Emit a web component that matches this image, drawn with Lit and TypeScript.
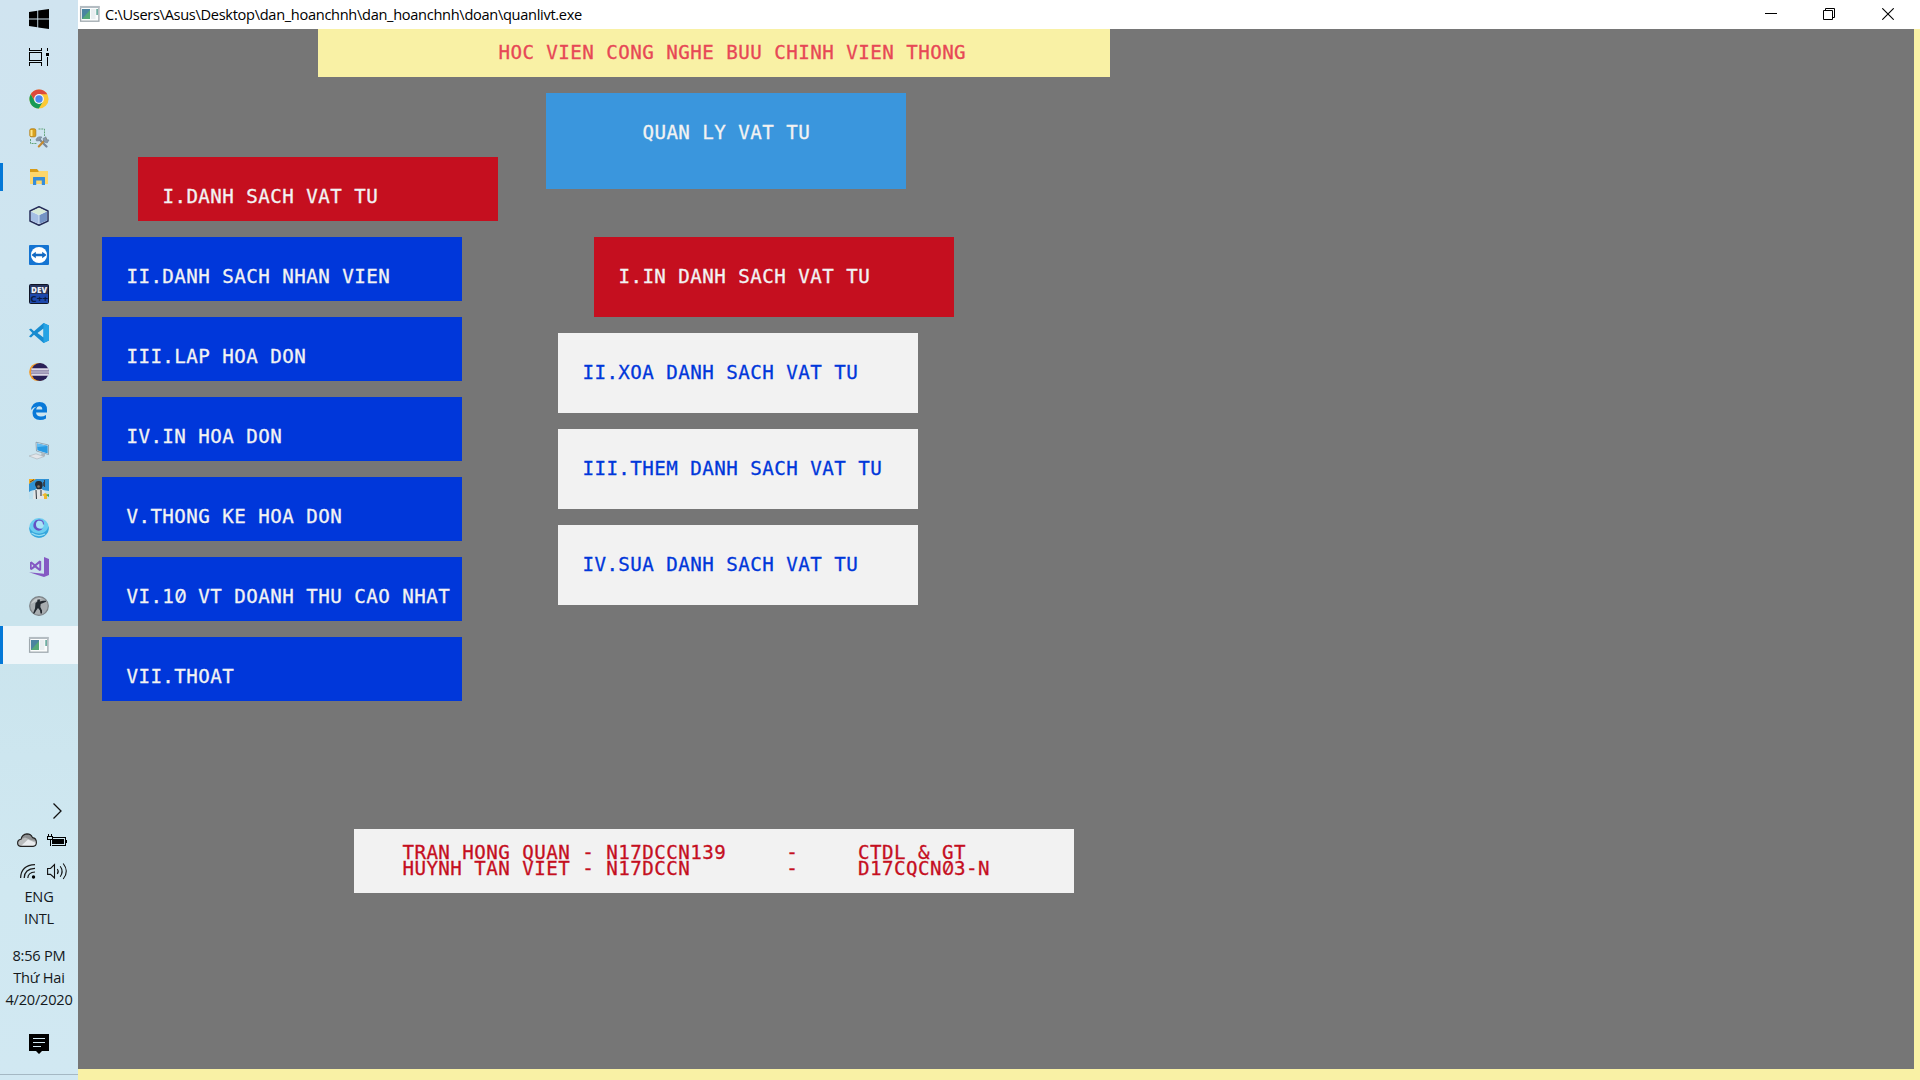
import { LitElement, html, css, svg } from "lit";
import { customElement, property } from "lit/decorators.js";
import { classMap } from "lit/directives/class-map.js";

const consoleIcon = svg`
  <rect x=".6" y="2.6" width="18.3" height="14.6" fill="#fafcfc" stroke="#9fa8ae" stroke-width="1.3"/>
  <rect x="0" y="2" width="19.5" height="2" fill="#b4bcc2"/>
  <rect x="2" y="5" width="8" height="10" fill="#4a84a0"/>
  <path d="M2 15L10 6V15Z" fill="#55a978"/>
  <rect x="11" y="5" width="4.5" height="10" fill="#e9eef0"/>
  <path d="M16.4 5h1.4v6h-1.4z" fill="#4c9a8b"/>`;

const icons: Record<string, unknown> = {
  windows: svg`<path d="M0 3L8.3 1.8V9.5H0ZM9.2 1.6L20 0V9.5H9.2ZM0 10.5H8.3V18.2L0 17ZM9.2 10.5H20V20L9.2 18.4Z" fill="#000"/>`,
  taskview: svg`<g fill="none" stroke="#000" stroke-width="1.1" shape-rendering="crispEdges">
    <path d="M.5 .5V3.5H12.5V.5M.5 5.5H12.5V13.5H.5ZM.5 19V15.5H12.5V19M18.5 .5V4M18.5 10V19"/></g><rect x="17" y="6" width="3" height="3"/>`,
  chrome: svg`<circle cx="10" cy="10" r="9.6" fill="#fcc934"/>
    <path d="M10 .4A9.6 9.6 0 0 1 18.3 5.3H10L6 12 1.7 5.2A9.6 9.6 0 0 1 10 .4Z" fill="#dc4a3d"/>
    <path d="M1.7 5.2L5.9 12.4 10 14.7 14 12.4 9.8 19.6A9.6 9.6 0 0 1 1.7 5.2Z" fill="#169a55"/>
    <circle cx="10" cy="10" r="4.9" fill="#f3f7fa"/><circle cx="10" cy="10" r="3.7" fill="#4b87ee"/>`,
  database: svg`<path d="M9.5 1H15.5V8M1.5 11V15.5H8" fill="none" stroke="#63a57c" stroke-dasharray="2 .8"/>
    <rect x=".8" y=".8" width="6" height="8" rx="1.5" fill="#d9a21d" stroke="#b37b13" stroke-width=".8"/>
    <path d="M2.5 2V8" stroke="#ffe78a" stroke-width="2"/>
    <path d="M10 11L17.5 18.5" stroke="#79889a" stroke-width="2.3" stroke-linecap="round"/>
    <path d="M17 11L9.8 18.5" stroke="#c58a2f" stroke-width="2.1" stroke-linecap="round"/>
    <path d="M7 11.5Q8.5 7.8 13 9L10 12.8 7.5 13ZM14 10.5L17 8.8 17.5 11.5 20 12 18.2 15 15 14Z" fill="#8899a8" stroke="#66788c" stroke-width=".5"/>`,
  explorer: svg`<path d="M1 2H8L9.7 4H18.5V8H1Z" fill="#d89b16"/><path d="M1 5H8.8L10.3 4H19V16.5Q19 17 18.4 17H1Z" fill="#fdd66b"/>
    <path d="M4 18V10.5Q4 10 4.5 10H15.5Q16 10 16 10.5V18H12.8V13.6H7.2V18Z" fill="#368cd8"/>`,
  cube: svg`<path d="M10 .8L19 5V15L10 19.3 1 15V5Z" fill="#eaf3fa" stroke="#252c58" stroke-width="1.5" stroke-linejoin="round"/>
    <path d="M2 5.5L10 9.2V18L2 14.4Z" fill="#a6bfe4"/><path d="M10 9.2L18 5.5V14.4L10 18Z" fill="#7392c4"/>
    <path d="M2.4 5.4L10 1.8 17.6 5.4 10 9Z" fill="#d7ead8"/><path d="M10 9V18" stroke="#d7e5f4"/>`,
  teamviewer: svg`<rect width="20" height="20" rx="1" fill="#1474d2"/><circle cx="10" cy="10" r="8.1" fill="#fff"/>
    <path d="M2.4 10L6.8 6.7V8.7H13.2V6.7L17.6 10 13.2 13.3V11.3H6.8V13.3Z" fill="#1269c2"/>`,
  dev: svg`<rect x=".5" y=".5" width="19" height="19" rx="1" fill="#1d48ac" stroke="#101526"/>
    <rect x="1" y="1" width="18" height="9" fill="#27355e"/>
    <text x="10" y="9" text-anchor="middle" font-family="Open Sans" font-size="8.4" font-weight="800" fill="#eef1f6" textLength="16" lengthAdjust="spacingAndGlyphs">DEV</text>
    <text x="1.3" y="18.2" font-family="Open Sans" font-size="9.5" font-weight="700" fill="#081940" textLength="18" lengthAdjust="spacingAndGlyphs">C++</text>`,
  vscode: svg`<path d="M14.5 0L20 2.5V17.5L14.5 20 5 11.7 2 14.5 0 13.4 3.4 10 0 6.6 2 5.4 5 8.3Z" fill="#178bd0"/>
    <path d="M14.5 5.5V14.5L8.5 10Z" fill="#cfe6f0"/><path d="M14.5 0L20 2.5V17.5L14.5 20Z" fill="#25a3e5"/>`,
  eclipse: svg`<circle cx="9.2" cy="10" r="9.1" fill="#f49a27"/><circle cx="11" cy="10" r="8.9" fill="#2a2057"/>
    <path d="M2.3 7.2H19.8M2 10H20M2.3 12.8H19.8" stroke="#dcd8e8" stroke-width="1.7"/><path d="M2.1 8.6H19.9M2.1 11.4H19.9" stroke="#9c94b5" stroke-width="1.2"/>`,
  edge: svg`<path d="M2 9Q3 1 10.5 1 18 1 18 9V11.6H7Q7.4 15.5 12 15.5 14.6 15.5 17 14V17.4Q14.5 19 11 19 3.6 18.8 3.5 12 3.5 7.5 8 5.4 4.3 5.7 2 9ZM7.2 8.5H13.3Q13.3 5.2 10.4 5.2 7.8 5.3 7.2 8.5Z" fill="#0879d8"/>`,
  remote: svg`<path d="M7 2.2L19.5 5V14.5L7.5 11Z" fill="#e5edf2" stroke="#657c8d" stroke-width=".6"/><path d="M8 3.4L18.7 5.8V13.4L8.3 10.3Z" fill="#299be3"/>
    <path d="M8.2 7L18.5 5.9 8 3.5Z" fill="#63bdf2"/><path d="M12.5 13L16 13.8V16.5H12Z" fill="#adb8bf"/><path d="M0 16L7 13.8 15 16.6 8 19Z" fill="#e3e6ea" stroke="#a9b1b7" stroke-width=".6"/>`,
  soldier: svg`<rect width="20" height="20" fill="#2f91d4"/><path d="M0 13Q5 9 20 12V20H0Z" fill="#bfe1ef"/>
    <path d="M0 0H7L0 5Z" fill="#f1ae25"/><path d="M1 3L5 .7" stroke="#6b3c15"/>
    <path d="M4 20L4.5 12 8 9.5H12L16 12.5V20Z" fill="#e3e5e6"/><path d="M6 6Q6 1.5 10 2 14 2 13.6 7L12.3 10.3H8Z" fill="#242a33"/>
    <path d="M7 11L7.5 20M12 11V17M15.5 1V8M14.7 3V7" stroke="#39414a" stroke-width="1.1"/><circle cx="9.5" cy="7.5" r="1.3" fill="#897462"/>
    <path d="M13 16L16 14 20 16 18 17V20H15V17Z" fill="#efb82c"/><path d="M17 16L20 15V18Z" fill="#35a863"/>`,
  swirl: svg`<circle cx="10" cy="10" r="9.9" fill="#6bcdf0"/>
    <path d="M.3 9Q3 16 11 15.5 18 15 19.5 8 20.8 14 15 18.4 8 21.5 3 17 .2 14 .3 9Z" fill="#36a5dc"/>
    <path d="M2.5 15Q9 19.5 16 16" fill="none" stroke="#96def3" stroke-width="1.2"/>
    <path d="M11 2.1A5.3 5.3 0 1 0 14 10.3 4.6 4.6 0 0 1 7.4 6.2 4.2 4.2 0 0 1 11 2.1Z" fill="#6550c4"/>
    <circle cx="10.9" cy="6.6" r="3.9" fill="#a9e2f6"/><path d="M9.5 2.2Q14.5 1.8 14.6 6.5" fill="none" stroke="#6a62cc" stroke-width="1.2"/>`,
  visual: svg`<path d="M15 0L20 2V18L15 20 0 15.3 15 16.7Z" fill="#8459c3"/>
    <path fill-rule="evenodd" d="M1 5.2L2.6 4.5 6 7.2 10.5 3.5 12.2 4.2V13.2L10.5 14 6 10.4 2.6 13 1 12.3ZM2.7 7V10.6L4.5 8.8ZM10.3 6.5L7.4 8.8 10.3 11.2Z" fill="#8459c3"/>`,
  strike: svg`<circle cx="10" cy="10" r="9.3" fill="#a8adb0" stroke="#7d8387" stroke-width="1.2"/><path d="M2 8Q5 1 13 2 7 5 2 8Z" fill="#c7cbcd"/>
    <path d="M8.5 3.5H11L10.8 5.5 14 4.8H17V5.8L13.5 7.2 11.7 8 11.3 11 13 14.5V17.5H11.5L11 14.5 9 12 7.2 14.5 5.4 17.5H4L6 12.5 6.5 7 8.2 5.8Z" fill="#22282f"/>`,
  console: consoleIcon,
};

@customElement("task-icon")
class TaskIcon extends LitElement {
  static styles = css`
    :host { display: block; width: 20px; height: 20px; }
    svg { display: block; overflow: visible; }
  `;
  @property() name = "";
  render() {
    return html`<svg width="20" height="20" viewBox="0 0 20 20">${icons[this.name]}</svg>`;
  }
}

@customElement("task-bar")
class TaskBar extends LitElement {
  static styles = css`
    :host {
      box-sizing: border-box; display: flex; flex-direction: column; width: 78px; height: 1080px;
      background: linear-gradient(#d0e4f0, #cee5f0 25%, #cae4ed 58%, #d0e8f1 82%, #d1e8f2);
      font: 14.6px/22px "Open Sans", "Noto Sans", sans-serif; color: #14191c;
    }
    .slot { display: flex; align-items: center; box-sizing: border-box; height: 39px; padding-left: 29px; }
    .start { height: 38px; }
    .view { height: 37px; margin-bottom: 4px; }
    .running { position: relative; }
    .running::before { content: ""; position: absolute; left: 0; top: 6px; width: 3px; height: 28px; background: #0478d7; }
    .current { height: 38px; margin-top: 1px; background: #eef5f9; }
    .current::before { top: 0; height: 38px; }
    .tray { display: flex; flex-direction: column; margin-top: auto; }
    .chevron { padding-left: 52px; height: 31px; }
    .status { display: flex; height: 29px; padding-left: 17px; gap: 10px; }
    .network { height: 23px; }
    svg { display: block; overflow: visible; }
    .text { text-align: center; letter-spacing: -0.22px; width: 78px; white-space: nowrap; }
    .clock { margin-top: 15px; }
    .action { padding: 24px 0 0 29px; height: 64px; box-sizing: border-box; }
    .peek { height: 5px; border-top: 1px solid #a5b8c3; }
  `;
  render() {
    const apps = ["chrome", "database", "explorer", "cube", "teamviewer", "dev", "vscode", "eclipse", "edge",
      "remote", "soldier", "swirl", "visual", "strike", "console"];
    return html`
      <div class="slot start"><task-icon name="windows"></task-icon></div>
      <div class="slot view"><task-icon name="taskview"></task-icon></div>
      ${apps.map((name) => html`<div class=${classMap({
        slot: true, running: name === "explorer" || name === "console", current: name === "console",
      })}><task-icon name=${name}></task-icon></div>`)}
      <div class="tray">
        <div class="chevron"><svg width="12" height="18"><path d="M1.5 1.5L9 9 1.5 16.5" fill="none" stroke="#111" stroke-width="1.3"/></svg></div>
        <div class="status">
          <svg width="20" height="17"><path d="M3.5 13.4Q.6 13 .6 10 .6 6.8 4 6.3 5 1.2 10 .9 14 .9 15.5 4.6 19.4 5 19.4 9.4 19.4 13 16 13.4Z" fill="#8c8f91"/>
            <path d="M4 6.3L8 4.5 14 7 19 8V12Q18 13.4 16 13.4H3.5Q.6 13 .6 10Z" fill="#b9bcbd"/><path d="M4 13L11 6.5 19 10 17 13Z" fill="#e9ecee"/>
            <path d="M3.5 13.4Q.6 13 .6 10 .6 6.8 4 6.3 5 1.2 10 .9 14 .9 15.5 4.6 19.4 5 19.4 9.4 19.4 13 16 13.4Z" fill="none" stroke="#222" stroke-width="1.1"/></svg>
          <svg width="20" height="17" shape-rendering="crispEdges"><path d="M6 4.5H18.5V12.5H4.5" fill="none" stroke="#000"/><rect x="5" y="6" width="12" height="5"/><rect x="19" y="7" width="1" height="3"/>
            <path d="M1.5 1V3M4.5 1V3M.5 3.5H5.5V6.5H.5ZM3 7V13" fill="none" stroke="#000"/></svg>
        </div>
        <div class="status network">
          <svg width="20" height="17"><g fill="none" stroke="#1a1a1a" stroke-width="1.2"><path d="M3.6 16Q4 3 18 2.6M7.2 16Q7.5 6.7 18 6.4M10.8 16Q11 10.5 18 10"/></g><circle cx="16.5" cy="15" r="1.7"/></svg>
          <svg width="20" height="19"><g fill="none" stroke="#111" stroke-width="1.1"><path d="M.6 6.5H3.5L7.5 2.5V16L3.5 12.4H.6ZM10.3 7Q12.2 9.5 10.3 12M13.2 4.3Q17 9.5 13.2 14.7M16.2 1.5Q22.5 9.5 16.2 17"/></g></svg>
        </div>
        <div class="text">ENG<br />INTL</div>
        <div class="text clock">8:56 PM<br />Thứ Hai<br />4/20/2020</div>
        <div class="action"><svg width="20" height="20"><path d="M0 0H20V17H13L10 20 7 17H0Z"/><path d="M4 4.5H16M4 8.5H16M4 12.5H12" stroke="#d1e8f2" stroke-width="1.1"/></svg></div>
        <div class="peek"></div>
      </div>`;
  }
}

@customElement("app-root")
class AppRoot extends LitElement {
  static styles = css`
    :host { display: flex; width: 1920px; height: 1080px; overflow: hidden; }
    .window { display: flex; flex-direction: column; width: 1842px; height: 1080px; background: #f9f1a5; }
    .titlebar { display: flex; align-items: center; height: 29px; background: #fff; flex: none; box-sizing: border-box; padding: 0 0 1px 2px; }
    .caption { margin: -1px 0 0 5px; font: 14.6px/26px "Open Sans", "Noto Sans", sans-serif; letter-spacing: -0.31px; color: #000; white-space: nowrap; }
    .controls { display: flex; margin-left: auto; padding-right: 26px; }
    .controls svg { display: block; }
    .restore { margin: 0 47px 0 46px; }
    .screen {
      width: 1836px; height: 1040px; background: #767676; overflow: hidden;
      font: 19.2px/16px "DejaVu Sans Mono", monospace; letter-spacing: 0.441px; color: #f2f2f2;
      text-indent: 0.4px; -webkit-text-stroke: 0.3px currentColor;
    }
    .banner, .title, .item, .line { white-space: pre; }
    .banner { box-sizing: border-box; width: 792px; height: 48px; margin-left: 240px; padding: 16px 0 0 180px; background: #f9f1a5; color: #e74856; }
    .body { display: flex; height: 752px; padding-left: 24px; }
    .menu { display: flex; flex-direction: column; gap: 16px; width: 444px; padding-top: 80px; box-sizing: border-box; }
    .item { box-sizing: border-box; width: 360px; height: 64px; padding: 32px 0 0 24px; background: #0037da; }
    .side { display: flex; flex-direction: column; padding-top: 16px; }
    .title { box-sizing: border-box; width: 360px; height: 96px; padding: 32px 0 0 96px; background: #3a96dd; }
    .submenu { display: flex; flex-direction: column; gap: 16px; padding: 48px 0 0 12px; }
    .submenu .item { height: 80px; background: #f2f2f2; color: #0037da; }
    .menu .selected, .submenu .selected { margin-left: 36px; background: #c50f1f; color: #f2f2f2; }
    .credits { box-sizing: border-box; width: 720px; height: 64px; margin-left: 276px; padding: 16px 0 0 48px; background: #f2f2f2; color: #c50f1f; }
    .line { height: 16px; }
    .zero {
      position: relative; top: -1px; display: inline-block; width: 12px; height: 16px; vertical-align: top;
      font-family: "Inter", sans-serif; font-feature-settings: "zero" 1; letter-spacing: 0; text-indent: 0;
    }
  `;
  private cells(text: string) {
    return text.split(/(0)/).map((part) => (part === "0" ? html`<span class="zero">0</span>` : part));
  }
  private items(labels: string[]) {
    return labels.map((label, i) => html`<div class=${classMap({ item: true, selected: i === 0 })}>${this.cells(label)}</div>`);
  }
  render() {
    return html`
      <task-bar></task-bar>
      <div class="window">
        <div class="titlebar">
          <task-icon name="console"></task-icon>
          <div class="caption">C:\\Users\\Asus\\Desktop\\dan_hoanchnh\\dan_hoanchnh\\doan\\quanlivt.exe</div>
          <div class="controls">
            <svg width="12" height="12"><path d="M0 5.5H12" stroke="#000"/></svg>
            <svg class="restore" width="12" height="12"><path d="M.5 2.5H9.5V11.5H.5ZM2.5 2V.5H11.5V9.5H10" fill="none" stroke="#000"/></svg>
            <svg width="12" height="12"><path d="M.3 .3L11.7 11.7M11.7 .3L.3 11.7" stroke="#000" stroke-width="1.1"/></svg>
          </div>
        </div>
        <div class="screen">
          <div class="banner">HOC VIEN CONG NGHE BUU CHINH VIEN THONG</div>
          <div class="body">
            <div class="menu">${this.items(["I.DANH SACH VAT TU", "II.DANH SACH NHAN VIEN", "III.LAP HOA DON", "IV.IN HOA DON",
              "V.THONG KE HOA DON", "VI.10 VT DOANH THU CAO NHAT", "VII.THOAT"])}</div>
            <div class="side">
              <div class="title">QUAN LY VAT TU</div>
              <div class="submenu">${this.items(["I.IN DANH SACH VAT TU", "II.XOA DANH SACH VAT TU",
                "III.THEM DANH SACH VAT TU", "IV.SUA DANH SACH VAT TU"])}</div>
            </div>
          </div>
          <div class="credits"><div class="line">TRAN HONG QUAN - N17DCCN139     -     CTDL &amp; GT</div><div class="line">${this.cells("HUYNH TAN VIET - N17DCCN        -     D17CQCN03-N")}</div></div>
        </div>
      </div>`;
  }
}
